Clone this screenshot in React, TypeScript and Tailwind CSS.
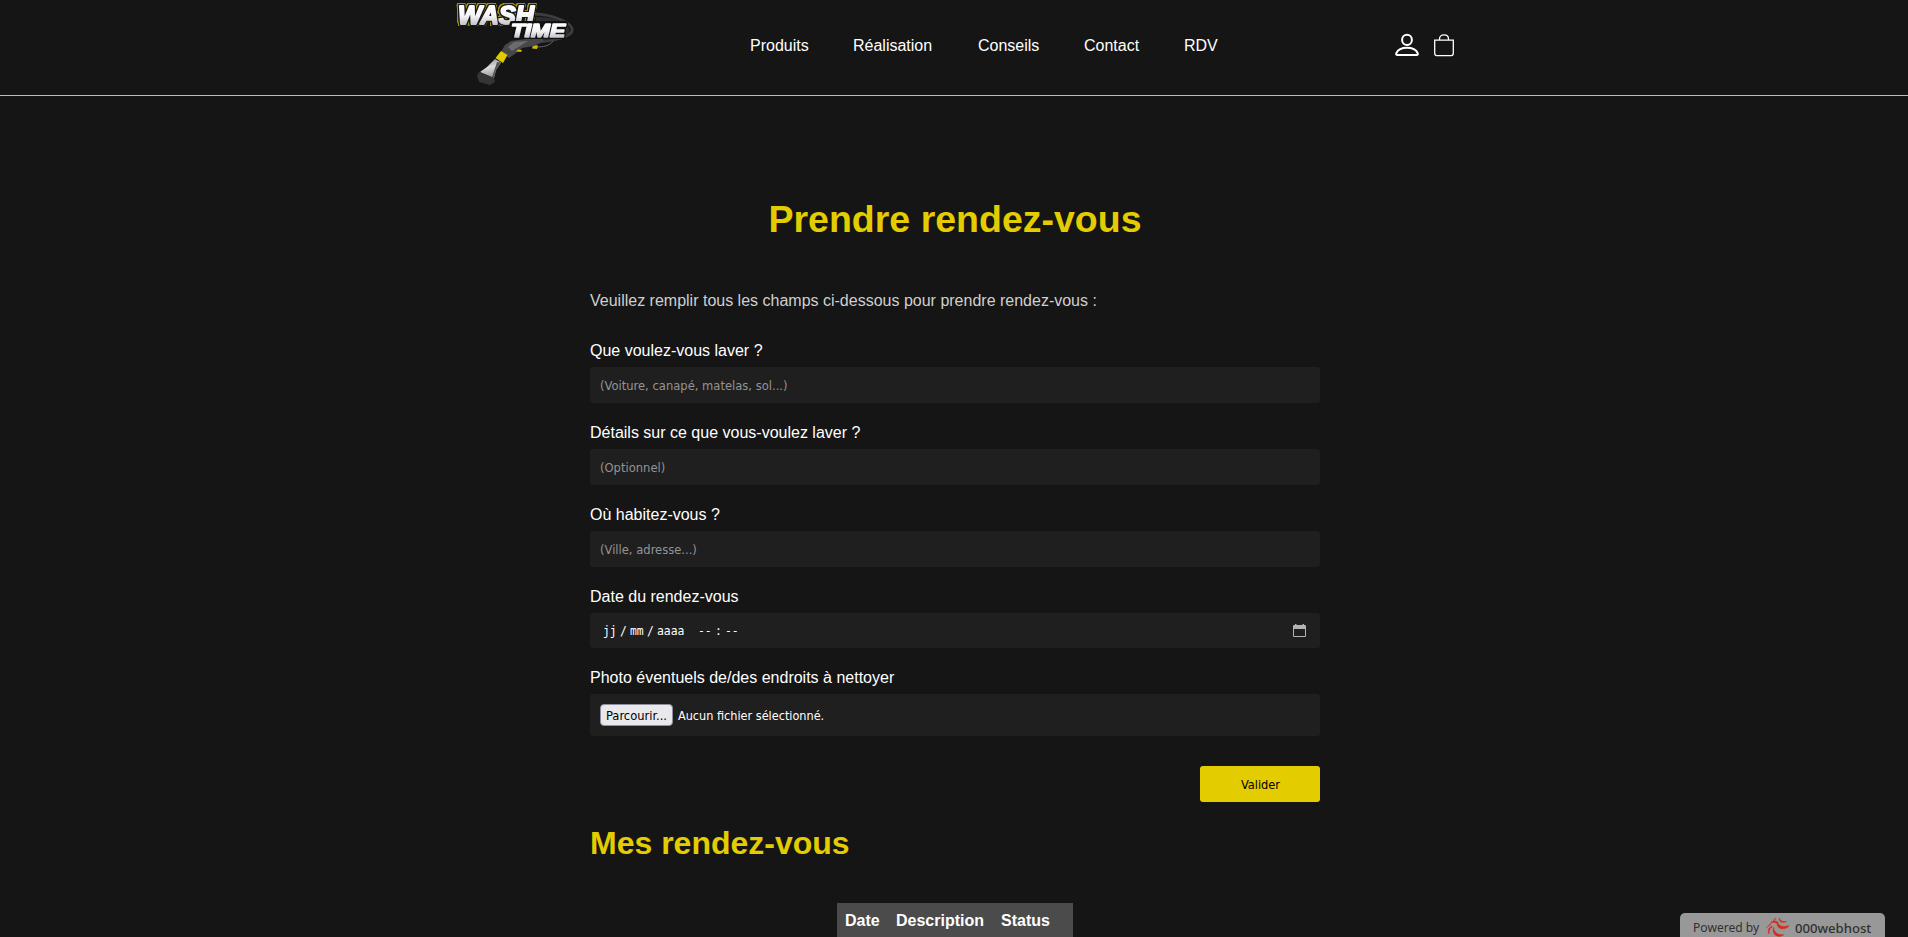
import React from "react";

const nav: [string, string][] = [
  ["Produits", "w-[103px]"],
  ["Réalisation", "w-[125px]"],
  ["Conseils", "w-[106px]"],
  ["Contact", "w-[100px]"],
  ["RDV", "w-[40px]"],
];

const ui = "font-['DejaVu_Sans_Condensed','DejaVu_Sans',sans-serif] [font-stretch:condensed]";

function Logo() {
  return (
    <svg width="124" height="92" viewBox="450 0 124 92" className="shrink-0">
      <defs>
        <linearGradient id="letter" x1="0" y1="0" x2="0" y2="1">
          <stop offset="0.2" stopColor="#ffffff" />
          <stop offset="0.55" stopColor="#f4f4f6" />
          <stop offset="0.85" stopColor="#c4c4ca" />
        </linearGradient>
        <linearGradient id="nozzle" x1="0" y1="0" x2="0.2" y2="1">
          <stop offset="0" stopColor="#8a8a8a" />
          <stop offset="0.5" stopColor="#dcdcdc" />
          <stop offset="1" stopColor="#9a9a9a" />
        </linearGradient>
        <filter id="soft" x="-20%" y="-20%" width="140%" height="140%">
          <feGaussianBlur stdDeviation="0.7" />
        </filter>
      </defs>
      <g fill="none" filter="url(#soft)">
        <path d="M533 14C552 14 574 23 572 31C569 40 540 42 520 43" stroke="#3c3c3f" strokeWidth="2.8" />
        <path d="M536 19C556 19 569 25 567 32C561 38 545 38 532 40" stroke="#2d2d30" strokeWidth="4" />
      </g>
      <path d="M553 41C550 46 543 47 536 47" fill="none" stroke="#6d6d6f" strokeWidth="0.9" />
      <path d="M533 45L538 45.5L537 49L532 48.5Z" fill="#cdb80a" />
      <path d="M501 52L505 45L511 41L541 37L544 41L534 46L522 48L516 53L509 58Z" fill="#474749" />
      <path d="M508 47L514 42L528 41L520 46L512 51Z" fill="#6c6c6e" />
      <path d="M518 49.5L522 50L521 52L516 51.5Z" fill="#cdb80a" />
      <path d="M501 51L507.5 55L503 63L495.5 58Z" fill="#e0ca00" />
      <path d="M495 59L501 62.5L496 70L494 78L480 72L487 67Z" fill="url(#nozzle)" />
      <path d="M497 62L501 62.5L496 70L494 78L492 77Z" fill="#565658" />
      <path d="M479 72L494 78L495 82L490 85L479 82L477 76Z" fill="#343436" filter="url(#soft)" />
      <g fontFamily="'Liberation Sans', Arial, sans-serif" fontWeight="700" fontStyle="italic" strokeLinejoin="round">
        <text
          x="458"
          y="23.7"
          fontSize="25"
          textLength="76"
          lengthAdjust="spacingAndGlyphs"
          stroke="url(#letter)"
          strokeWidth="1.8"
          fill="url(#letter)"
          className="[filter:drop-shadow(1px_0_0_#18181a)_drop-shadow(-1px_0_0_#18181a)_drop-shadow(0_1px_0_#18181a)_drop-shadow(0_-1px_0_#18181a)_drop-shadow(0.8px_0_0_#a08e0a)_drop-shadow(-0.8px_0_0_#a08e0a)_drop-shadow(0_0.8px_0_#a08e0a)_drop-shadow(0_-0.6px_0_#a08e0a)]"
        >
          WASH
        </text>
        <text
          x="511"
          y="36.5"
          fontSize="18.5"
          textLength="54"
          lengthAdjust="spacingAndGlyphs"
          stroke="url(#letter)"
          strokeWidth="1.6"
          fill="url(#letter)"
          className="[filter:drop-shadow(1.2px_0_0_#101012)_drop-shadow(-1.2px_0_0_#101012)_drop-shadow(0_1.2px_0_#101012)_drop-shadow(0_-1.2px_0_#101012)]"
        >
          TIME
        </text>
      </g>
    </svg>
  );
}

function Label({ children }: { children: React.ReactNode }) {
  return <div className="text-base leading-[18px] text-white">{children}</div>;
}

function Field({ label, hint }: { label: string; hint: string }) {
  return (
    <div className="mb-[21px]">
      <Label>{label}</Label>
      <div className={`mt-[7px] flex h-9 items-center rounded-[3px] bg-[#1f1f1f] px-[10px] pt-[2px] text-[12.85px] text-[#949494] ${ui}`}>
        {hint}
      </div>
    </div>
  );
}

export default function App() {
  return (
    <div className="relative h-[937px] overflow-hidden bg-[#151515] font-['Liberation_Sans',Arial,sans-serif] text-white">
      <header className="flex h-24 justify-center border-b border-[#e3cc00]">
        <div className="flex w-[1008px]">
          <Logo />
          <nav className="ml-[176px] flex h-[92px] w-[474px] items-center text-base">
            {nav.map(([name, width]) => (
              <a key={name} className={`shrink-0 ${width}`}>{name}</a>
            ))}
          </nav>
          <div className="ml-[171px] flex h-[90px] items-center gap-[14px]">
            <svg width="24" height="24" viewBox="0 0 24 24" fill="none" stroke="white" strokeWidth="2">
              <ellipse cx="12" cy="6.9" rx="4.9" ry="5.1" />
              <path d="M2 22.1C1 22.1 1 21 1.400 20C3 16.500 7 14.800 12 14.800S21 16.500 22.600 20C23 21 23 22.100 22 22.100Z" />
            </svg>
            <svg width="22" height="24" viewBox="0 0 22 24" fill="none" stroke="white" strokeWidth="1.3">
              <path d="M1.7 7.2H20.3V20.2Q20.3 22.6 18.2 22.6H3.8Q1.7 22.6 1.7 20.2ZM6.5 7.2V5.9C6.5 3.4 8.5 1.9 11 1.9S15.5 3.4 15.5 5.9V7.2" />
            </svg>
          </div>
        </div>
      </header>

      <main className="ml-[590px] w-[730px]">
        <h1 className="pt-[101px] text-center text-[37.5px] leading-[44px] font-bold text-[#e3cc00]">Prendre rendez-vous</h1>
        <p className="mt-[51px] mb-[32px] text-base leading-[18px] text-[#cfcfcf]">Veuillez remplir tous les champs ci-dessous pour prendre rendez-vous :</p>
        <Field label="Que voulez-vous laver ?" hint="(Voiture, canapé, matelas, sol...)" />
        <Field label="Détails sur ce que vous-voulez laver ?" hint="(Optionnel)" />
        <Field label="Où habitez-vous ?" hint="(Ville, adresse...)" />

        <Label>Date du rendez-vous</Label>
        <div className="mt-[7px] mb-[21px] flex h-[35px] items-center justify-between rounded-[3px] bg-[#1f1f1f] px-[13px] font-['DejaVu_Sans_Mono',monospace] text-[11.4px]">
          <div className="flex pt-[2px]">
            <span className="w-[17px]">jj</span>
            <span className="w-[10px]">/</span>
            <span className="w-[17px]">mm</span>
            <span className="w-[10px]">/</span>
            <span className="w-[41px]">aaaa</span>
            <span className="w-[17px]">--</span>
            <span className="w-[10px]">:</span>
            <span>--</span>
          </div>
          <svg width="14" height="14" viewBox="0 0 14 14">
            <path fill="#b3b3b3" d="M2 1V0H3.500V1H9.500V0H11V1H12Q13 1 13 2V12Q13 13 12 13H1Q0 13 0 12V2Q0 1 1 1ZM1 5V12H12V5Z" />
          </svg>
        </div>

        <Label>Photo éventuels de/des endroits à nettoyer</Label>
        <div className={`mt-[7px] flex h-[42px] items-center rounded-[3px] bg-[#1f1f1f] px-[10px] text-[12.8px] ${ui}`}>
          <span className="flex h-[22px] w-[73px] items-center justify-center rounded-[4px] border border-[#8f8f9d] bg-[#e9e9ed] pt-[1px] text-black">Parcourir...</span>
          <span className="ml-[5px] pt-[2px] text-[12.55px]">Aucun fichier sélectionné.</span>
        </div>

        <div className="mt-[30px] flex justify-end">
          <button className={`h-9 w-[120px] rounded-[3px] bg-[#e3cc00] pt-[2px] pl-[1px] text-[12.7px] text-black ${ui}`}>Valider</button>
        </div>
        <h2 className="mt-[23px] text-[32px] leading-9 font-bold text-[#e3cc00]">Mes rendez-vous</h2>
        <div className="mt-[42px] ml-[247px] flex h-[34px] w-[236px] bg-[#4b4b4b] pt-[9px] pl-[8px] text-base leading-[18px] font-bold">
          <span className="w-[51px]">Date</span>
          <span className="w-[105px]">Description</span>
          <span>Status</span>
        </div>
      </main>

      <div className="absolute top-[913px] left-[1680px] flex h-[34px] w-[205px] rounded-t-[5px] bg-[#989898] pl-[13px] font-['Noto_Sans',sans-serif] text-[#303030]">
        <span className="w-[73px] text-[12.1px] leading-[30px]">Powered by</span>
        <svg width="25" height="24" viewBox="0 0 25 24" className="mt-[4px] shrink-0" fill="#dc2a16" stroke="#dc2a16" strokeWidth="0.5">
          <path d="M12 6C13 9 17 10.500 23 8.500C21 12.500 13 13.500 11 8Z" />
          <path d="M7.500 10C8 15.500 12 18.500 18 17.500C13 22 5 18 7.500 10Z" />
          <path d="M12 5C8 3 6 4 4 6.500C7 5 9 5 12 7Z" />
          <path d="M13 1C13 5 16 6.500 20.500 4.500C17 5 14.500 4 13 1Z" />
          <path d="M6 9C2 11 1.500 14 3 17C3 13.500 4 11 6 10Z" />
          <path d="M0.500 10.500L4 7L4.500 7.600ZM7 3.500L10 1L8.500 3.300Z" />
        </svg>
        <span className="ml-[4px] text-[13.1px] leading-[30px] font-medium">000webhost</span>
      </div>
    </div>
  );
}
